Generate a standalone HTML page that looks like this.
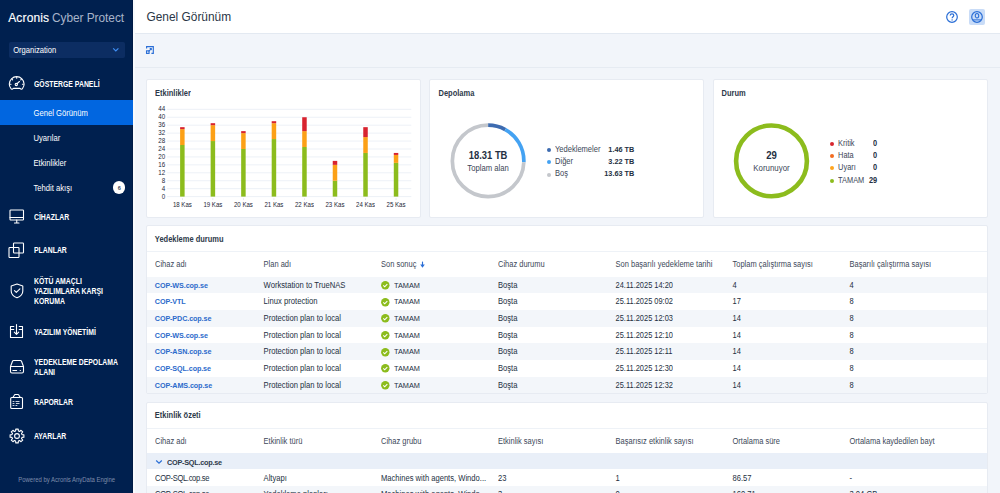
<!DOCTYPE html>
<html><head><meta charset="utf-8"><style>
html,body{margin:0;padding:0;}
body{width:1000px;height:493px;overflow:hidden;position:relative;background:#f2f5fa;font-family:"Liberation Sans",sans-serif;}
.t{position:absolute;white-space:nowrap;line-height:1;}
</style></head><body>
<div style="position:absolute;left:0px;top:0px;width:133px;height:493px;background:#00204f;"></div>
<div style="position:absolute;left:132px;top:0px;width:1px;height:493px;background:#001a44;"></div>
<div style="position:absolute;left:133px;top:0px;width:2px;height:493px;background:#f8fafd;"></div>
<div class="t" style="top:12.00px;font-size:12px;font-weight:400;color:#ffffff;transform:scale(1,1.0);transform-origin:0 10px;left:8.20px;letter-spacing:0.15px;-webkit-text-stroke:0.15px #fff;">Acronis</div>
<div class="t" style="top:13.00px;font-size:11.9px;font-weight:400;color:#a8b4ca;transform:scale(1,1.0);transform-origin:0 9px;left:52.00px;letter-spacing:-0.05px;">Cyber Protect</div>
<div style="position:absolute;left:8.5px;top:42px;width:116.5px;height:16.3px;background:#0c2d62;border-radius:2px;"></div>
<div class="t" style="top:47.00px;font-size:7.6px;font-weight:400;color:#ffffff;transform:scale(1,1.1);transform-origin:0 6px;left:13.20px;">Organization</div>
<svg style="position:absolute;left:112.4px;top:47.2px" width="8" height="6" viewBox="0 0 8 6"><path d="M1.2 1.4 L3.8 3.9 L6.4 1.4" fill="none" stroke="#3f8ff5" stroke-width="1.2"/></svg>
<div style="position:absolute;left:0px;top:100px;width:133px;height:25px;background:#0166e0;"></div>
<div class="t" style="top:110.00px;font-size:7.65px;font-weight:400;color:#ffffff;transform:scale(1,1.1);transform-origin:0 6px;left:33.50px;">Genel Görünüm</div>
<div class="t" style="top:81.00px;font-size:7.4px;font-weight:700;color:#ffffff;transform:scale(0.93,1.1);transform-origin:0 6px;left:33.50px;">GÖSTERGE PANELİ</div>
<div class="t" style="top:135.00px;font-size:7.65px;font-weight:400;color:#ffffff;transform:scale(1,1.1);transform-origin:0 6px;left:33.50px;">Uyarılar</div>
<div class="t" style="top:160.00px;font-size:7.65px;font-weight:400;color:#ffffff;transform:scale(1,1.1);transform-origin:0 6px;left:33.50px;">Etkinlikler</div>
<div class="t" style="top:185.00px;font-size:7.65px;font-weight:400;color:#ffffff;transform:scale(1,1.1);transform-origin:0 6px;left:33.50px;">Tehdit akışı</div>
<div style="position:absolute;left:113px;top:181.3px;width:12.3px;height:12.3px;background:#ffffff;border-radius:50%;"></div>
<div class="t" style="top:186.00px;font-size:5.6px;font-weight:700;color:#3f4a5c;transform:scale(1,1.0);transform-origin:0 4px;left:-80.80px;width:400px;text-align:center;">6</div>
<div class="t" style="top:214.00px;font-size:7.4px;font-weight:700;color:#ffffff;transform:scale(0.93,1.1);transform-origin:0 6px;left:33.50px;">CİHAZLAR</div>
<div class="t" style="top:247.00px;font-size:7.4px;font-weight:700;color:#ffffff;transform:scale(0.93,1.1);transform-origin:0 6px;left:33.50px;">PLANLAR</div>
<div class="t" style="top:278.00px;font-size:7.4px;font-weight:700;color:#ffffff;transform:scale(0.93,1.1);transform-origin:0 6px;left:33.50px;">KÖTÜ AMAÇLI</div>
<div class="t" style="top:288.00px;font-size:7.4px;font-weight:700;color:#ffffff;transform:scale(0.93,1.1);transform-origin:0 6px;left:33.50px;">YAZILIMLARA KARŞI</div>
<div class="t" style="top:298.00px;font-size:7.4px;font-weight:700;color:#ffffff;transform:scale(0.93,1.1);transform-origin:0 6px;left:33.50px;">KORUMA</div>
<div class="t" style="top:329.00px;font-size:7.4px;font-weight:700;color:#ffffff;transform:scale(0.93,1.1);transform-origin:0 6px;left:33.50px;">YAZILIM YÖNETİMİ</div>
<div class="t" style="top:359.00px;font-size:7.4px;font-weight:700;color:#ffffff;transform:scale(0.93,1.1);transform-origin:0 6px;left:33.50px;">YEDEKLEME DEPOLAMA</div>
<div class="t" style="top:369.00px;font-size:7.4px;font-weight:700;color:#ffffff;transform:scale(0.93,1.1);transform-origin:0 6px;left:33.50px;">ALANI</div>
<div class="t" style="top:399.00px;font-size:7.4px;font-weight:700;color:#ffffff;transform:scale(0.93,1.1);transform-origin:0 6px;left:33.50px;">RAPORLAR</div>
<div class="t" style="top:433.00px;font-size:7.4px;font-weight:700;color:#ffffff;transform:scale(0.93,1.1);transform-origin:0 6px;left:33.50px;">AYARLAR</div>
<div class="t" style="top:478.00px;font-size:5.95px;font-weight:400;color:#7d8cab;transform:scale(1,1.1);transform-origin:0 4px;left:18.30px;">Powered by Acronis AnyData Engine</div>
<svg style="position:absolute;left:8px;top:75px" width="18" height="17" viewBox="0 0 18 17"><path d="M2.6 13 C1.7 11.8 1.3 10.4 1.3 9 A7.4 7.4 0 0 1 16.1 9 C16.1 10.4 15.7 11.8 14.8 13 C14.5 13.6 14.1 14.3 13.4 14.3 C12.8 14.3 12.5 13.4 11.8 13.4 H5.6 C4.9 13.4 4.6 14.3 4 14.3 C3.3 14.3 2.9 13.6 2.6 13 Z" fill="none" stroke="#ffffff" stroke-width="1.1" stroke-linecap="round" stroke-linejoin="round"/><circle cx="8.3" cy="9.5" r="1.15" fill="none" stroke="#ffffff" stroke-width="1.1" stroke-linecap="round" stroke-linejoin="round"/><path d="M9.1 8.7 L11.4 6.5" fill="none" stroke="#ffffff" stroke-width="1.1" stroke-linecap="round" stroke-linejoin="round"/><path d="M8.7 2.3 V3.2 M4 4.2 L4.6 4.8 M13.4 4.2 L12.8 4.8 M2.2 9.3 H3 M15.2 9.3 H14.4" fill="none" stroke="#ffffff" stroke-width="1.1" stroke-linecap="round" stroke-linejoin="round"/></svg>
<svg style="position:absolute;left:9px;top:209px" width="16" height="16" viewBox="0 0 16 16"><rect x="1" y="1" width="13.5" height="10" rx="0.8" fill="none" stroke="#ffffff" stroke-width="1.1" stroke-linecap="round" stroke-linejoin="round"/><path d="M1 8.5 H14.5 M7.75 11 V13.5 M5.5 14 H10" fill="none" stroke="#ffffff" stroke-width="1.1" stroke-linecap="round" stroke-linejoin="round"/></svg>
<svg style="position:absolute;left:8px;top:242px" width="17" height="17" viewBox="0 0 17 17"><rect x="5.5" y="1" width="10" height="10" rx="0.8" fill="none" stroke="#ffffff" stroke-width="1.1" stroke-linecap="round" stroke-linejoin="round"/><rect x="1" y="5.5" width="10" height="10" rx="0.8" fill="none" stroke="#ffffff" stroke-width="1.1" stroke-linecap="round" stroke-linejoin="round"/></svg>
<svg style="position:absolute;left:9.5px;top:283px" width="15" height="16" viewBox="0 0 15 16"><path d="M7 1 L12.8 3 V8 C12.8 11.2 10.5 13.5 7 14.8 C3.5 13.5 1.2 11.2 1.2 8 V3 Z" fill="none" stroke="#ffffff" stroke-width="1.1" stroke-linecap="round" stroke-linejoin="round"/><path d="M4.5 7.6 L6.3 9.4 L9.9 5.9" fill="none" stroke="#ffffff" stroke-width="1.1" stroke-linecap="round" stroke-linejoin="round"/></svg>
<svg style="position:absolute;left:9px;top:324px" width="16" height="16" viewBox="0 0 16 16"><path d="M4.8 2.5 H1.5 V13.5 H13.5 V2.5 H10.2 M1.5 5.5 H4.8 M10.2 5.5 H13.5 M7.5 0.6 V10.2 M5.3 8.2 L7.5 10.4 L9.7 8.2" fill="none" stroke="#ffffff" stroke-width="1.1" stroke-linecap="round" stroke-linejoin="round"/></svg>
<svg style="position:absolute;left:9px;top:359px" width="17" height="17" viewBox="0 0 17 17"><path d="M4.6 1.5 H11.4 C12 1.5 12.3 1.8 12.5 2.3 L14.5 7.5 H1.5 L3.5 2.3 C3.7 1.8 4 1.5 4.6 1.5 Z" fill="none" stroke="#ffffff" stroke-width="1.1" stroke-linecap="round" stroke-linejoin="round"/><path d="M1.5 7.5 V12.5 C1.5 13.4 2.1 14 3 14 H13 C13.9 14 14.5 13.4 14.5 12.5 V7.5" fill="none" stroke="#ffffff" stroke-width="1.1" stroke-linecap="round" stroke-linejoin="round"/><path d="M3.9 11.5 H7.6 M11.2 11.5 H11.4" stroke="#fff" stroke-width="1.2" stroke-linecap="round"/></svg>
<svg style="position:absolute;left:9px;top:393px" width="16" height="18" viewBox="0 0 16 18"><rect x="1.7" y="4.5" width="11.8" height="11" rx="1" fill="none" stroke="#ffffff" stroke-width="1.1" stroke-linecap="round" stroke-linejoin="round"/><path d="M3.9 4.5 L5.1 2.4 C5.4 1.8 5.7 1.5 6.3 1.5 H8.9 C9.5 1.5 9.8 1.8 10.1 2.4 L11.3 4.5" fill="none" stroke="#ffffff" stroke-width="1.1" stroke-linecap="round" stroke-linejoin="round"/><path d="M3.6 8.5 H5.4 M6.5 8.5 H10.5 M3.6 10.5 H5.4 M6.9 10.5 H10.5 M3.6 12.5 H5.4 M6.5 12.5 H8.3" stroke="#fff" stroke-opacity="0.8" stroke-width="1.1"/></svg>
<svg style="position:absolute;left:8.6px;top:427.5px" width="16" height="16" viewBox="0 0 16 16"><path d="M6.61 2.99 L6.78 1.11 L9.22 1.11 L9.39 2.99 L10.56 3.47 L12.02 2.27 L13.73 3.98 L12.53 5.44 L13.01 6.61 L14.89 6.78 L14.89 9.22 L13.01 9.39 L12.53 10.56 L13.73 12.02 L12.02 13.73 L10.56 12.53 L9.39 13.01 L9.22 14.89 L6.78 14.89 L6.61 13.01 L5.44 12.53 L3.98 13.73 L2.27 12.02 L3.47 10.56 L2.99 9.39 L1.11 9.22 L1.11 6.78 L2.99 6.61 L3.47 5.44 L2.27 3.98 L3.98 2.27 L5.44 3.47 Z" fill="none" stroke="#ffffff" stroke-width="1.1" stroke-linecap="round" stroke-linejoin="round"/><circle cx="8" cy="8" r="2.4" fill="none" stroke="#ffffff" stroke-width="1.1" stroke-linecap="round" stroke-linejoin="round"/></svg>
<div style="position:absolute;left:135px;top:0px;width:865px;height:33px;background:#ffffff;"></div>
<div style="position:absolute;left:135px;top:33px;width:865px;height:1px;background:#e3e9f1;"></div>
<div style="position:absolute;left:135px;top:34px;width:865px;height:32.5px;background:#f2f5fa;"></div>
<div style="position:absolute;left:135px;top:66.5px;width:865px;height:1px;background:#e6ebf2;"></div>
<div style="position:absolute;left:135px;top:67.5px;width:865px;height:430px;background:#f2f5fa;"></div>
<div class="t" style="top:12.00px;font-size:11.9px;font-weight:400;color:#2a3546;transform:scale(1,1.0);transform-origin:0 9px;left:146.50px;">Genel Görünüm</div>
<svg style="position:absolute;left:945px;top:9.7px" width="14" height="14" viewBox="0 0 14 14"><circle cx="7" cy="7" r="5.3" fill="none" stroke="#2a6ed6" stroke-width="1.2"/><path d="M5.2 5.6 C5.2 4.5 6 3.9 7 3.9 C8 3.9 8.8 4.5 8.8 5.5 C8.8 6.6 7.1 6.8 7.1 8.2" fill="none" stroke="#2a6ed6" stroke-width="1.2"/><circle cx="7.1" cy="9.9" r="0.7" fill="#2a6ed6"/></svg>
<div style="position:absolute;left:969px;top:8.5px;width:16px;height:16.3px;background:#c9dcf7;border-radius:2px;"></div>
<svg style="position:absolute;left:970px;top:9.7px" width="14" height="14" viewBox="0 0 14 14"><circle cx="7" cy="7" r="5.3" fill="none" stroke="#2a6ed6" stroke-width="1.2"/><ellipse cx="7" cy="5.7" rx="1.75" ry="2.2" fill="none" stroke="#2a6ed6" stroke-width="1.05"/><path d="M2.9 9.9 H11.1" stroke="#2a6ed6" stroke-width="1.0"/></svg>
<svg style="position:absolute;left:145px;top:45px" width="10" height="10" viewBox="0 0 10 10"><path d="M1.6 3.5 V1.6 H8.3 V8.4 H6.4" fill="none" stroke="#2a6ed6" stroke-width="1.15"/><rect x="1.55" y="5.85" width="2.5" height="2.55" fill="none" stroke="#2a6ed6" stroke-width="1.15"/><path d="M3.6 6.4 L6.2 3.8" stroke="#2a6ed6" stroke-width="1.15"/><path d="M4.2 2.9 H6.8 V5.5 Z" fill="#2a6ed6"/></svg>
<div style="position:absolute;left:146px;top:79px;width:275px;height:139px;background:#ffffff;box-sizing:border-box;border:1px solid #e7ebf2;border-radius:2px;"></div>
<div style="position:absolute;left:429px;top:79px;width:275px;height:139px;background:#ffffff;box-sizing:border-box;border:1px solid #e7ebf2;border-radius:2px;"></div>
<div style="position:absolute;left:713px;top:79px;width:275px;height:139px;background:#ffffff;box-sizing:border-box;border:1px solid #e7ebf2;border-radius:2px;"></div>
<div class="t" style="top:90.00px;font-size:7.5px;font-weight:700;color:#2d394a;transform:scale(1,1.1);transform-origin:0 6px;left:155.00px;">Etkinlikler</div>
<div class="t" style="top:90.00px;font-size:7.5px;font-weight:700;color:#2d394a;transform:scale(1,1.1);transform-origin:0 6px;left:438.50px;">Depolama</div>
<div class="t" style="top:90.00px;font-size:7.5px;font-weight:700;color:#2d394a;transform:scale(1,1.1);transform-origin:0 6px;left:721.50px;">Durum</div>
<svg style="position:absolute;left:0;top:0" width="1000" height="493"><rect x="167.1" y="196.10" width="244.20" height="1" fill="#edf1f7"/><rect x="167.1" y="188.16" width="244.20" height="1" fill="#edf1f7"/><rect x="167.1" y="180.23" width="244.20" height="1" fill="#edf1f7"/><rect x="167.1" y="172.29" width="244.20" height="1" fill="#edf1f7"/><rect x="167.1" y="164.35" width="244.20" height="1" fill="#edf1f7"/><rect x="167.1" y="156.42" width="244.20" height="1" fill="#edf1f7"/><rect x="167.1" y="148.48" width="244.20" height="1" fill="#edf1f7"/><rect x="167.1" y="140.55" width="244.20" height="1" fill="#edf1f7"/><rect x="167.1" y="132.61" width="244.20" height="1" fill="#edf1f7"/><rect x="167.1" y="124.67" width="244.20" height="1" fill="#edf1f7"/><rect x="167.1" y="116.74" width="244.20" height="1" fill="#edf1f7"/><rect x="167.1" y="108.80" width="244.20" height="1" fill="#edf1f7"/><rect x="180.11" y="145.01" width="4.5" height="51.59" fill="#8cbc1d"/><rect x="180.11" y="129.14" width="4.5" height="15.87" fill="#fca016"/><rect x="180.11" y="127.16" width="4.5" height="1.98" fill="#d8232f"/><rect x="181.96" y="198.10" width="0.8" height="2" fill="#dde3ec"/><rect x="210.64" y="141.05" width="4.5" height="55.55" fill="#8cbc1d"/><rect x="210.64" y="125.17" width="4.5" height="15.87" fill="#fca016"/><rect x="210.64" y="123.19" width="4.5" height="1.98" fill="#d8232f"/><rect x="212.49" y="198.10" width="0.8" height="2" fill="#dde3ec"/><rect x="241.16" y="148.98" width="4.5" height="47.62" fill="#8cbc1d"/><rect x="241.16" y="133.11" width="4.5" height="15.87" fill="#fca016"/><rect x="241.16" y="131.12" width="4.5" height="1.98" fill="#d8232f"/><rect x="243.01" y="198.10" width="0.8" height="2" fill="#dde3ec"/><rect x="271.69" y="139.06" width="4.5" height="57.54" fill="#8cbc1d"/><rect x="271.69" y="123.19" width="4.5" height="15.87" fill="#fca016"/><rect x="271.69" y="121.20" width="4.5" height="1.98" fill="#d8232f"/><rect x="273.54" y="198.10" width="0.8" height="2" fill="#dde3ec"/><rect x="302.21" y="147.00" width="4.5" height="49.60" fill="#8cbc1d"/><rect x="302.21" y="131.12" width="4.5" height="15.87" fill="#fca016"/><rect x="302.21" y="117.24" width="4.5" height="13.89" fill="#d8232f"/><rect x="304.06" y="198.10" width="0.8" height="2" fill="#dde3ec"/><rect x="332.74" y="180.73" width="4.5" height="15.87" fill="#8cbc1d"/><rect x="332.74" y="164.85" width="4.5" height="15.87" fill="#fca016"/><rect x="332.74" y="160.89" width="4.5" height="3.97" fill="#d8232f"/><rect x="334.59" y="198.10" width="0.8" height="2" fill="#dde3ec"/><rect x="363.26" y="152.95" width="4.5" height="43.65" fill="#8cbc1d"/><rect x="363.26" y="137.08" width="4.5" height="15.87" fill="#fca016"/><rect x="363.26" y="127.16" width="4.5" height="9.92" fill="#d8232f"/><rect x="365.11" y="198.10" width="0.8" height="2" fill="#dde3ec"/><rect x="393.79" y="162.87" width="4.5" height="33.73" fill="#8cbc1d"/><rect x="393.79" y="154.93" width="4.5" height="7.94" fill="#fca016"/><rect x="393.79" y="152.95" width="4.5" height="1.98" fill="#d8232f"/><rect x="395.64" y="198.10" width="0.8" height="2" fill="#dde3ec"/></svg>
<div class="t" style="top:194.00px;font-size:6.2px;font-weight:400;color:#1e2838;transform:scale(1,1.1);transform-origin:0 5px;right:834.80px;">0</div>
<div class="t" style="top:186.00px;font-size:6.2px;font-weight:400;color:#1e2838;transform:scale(1,1.1);transform-origin:0 5px;right:834.80px;">4</div>
<div class="t" style="top:178.00px;font-size:6.2px;font-weight:400;color:#1e2838;transform:scale(1,1.1);transform-origin:0 5px;right:834.80px;">8</div>
<div class="t" style="top:170.00px;font-size:6.2px;font-weight:400;color:#1e2838;transform:scale(1,1.1);transform-origin:0 5px;right:834.80px;">12</div>
<div class="t" style="top:162.00px;font-size:6.2px;font-weight:400;color:#1e2838;transform:scale(1,1.1);transform-origin:0 5px;right:834.80px;">16</div>
<div class="t" style="top:154.00px;font-size:6.2px;font-weight:400;color:#1e2838;transform:scale(1,1.1);transform-origin:0 5px;right:834.80px;">20</div>
<div class="t" style="top:146.00px;font-size:6.2px;font-weight:400;color:#1e2838;transform:scale(1,1.1);transform-origin:0 5px;right:834.80px;">24</div>
<div class="t" style="top:138.00px;font-size:6.2px;font-weight:400;color:#1e2838;transform:scale(1,1.1);transform-origin:0 5px;right:834.80px;">28</div>
<div class="t" style="top:130.00px;font-size:6.2px;font-weight:400;color:#1e2838;transform:scale(1,1.1);transform-origin:0 5px;right:834.80px;">32</div>
<div class="t" style="top:122.00px;font-size:6.2px;font-weight:400;color:#1e2838;transform:scale(1,1.1);transform-origin:0 5px;right:834.80px;">36</div>
<div class="t" style="top:114.00px;font-size:6.2px;font-weight:400;color:#1e2838;transform:scale(1,1.1);transform-origin:0 5px;right:834.80px;">40</div>
<div class="t" style="top:106.00px;font-size:6.2px;font-weight:400;color:#1e2838;transform:scale(1,1.1);transform-origin:0 5px;right:834.80px;">44</div>
<div class="t" style="top:202.00px;font-size:6.1px;font-weight:400;color:#1e2838;transform:scale(1,1.1);transform-origin:0 5px;left:-17.64px;width:400px;text-align:center;">18 Kas</div>
<div class="t" style="top:202.00px;font-size:6.1px;font-weight:400;color:#1e2838;transform:scale(1,1.1);transform-origin:0 5px;left:12.89px;width:400px;text-align:center;">19 Kas</div>
<div class="t" style="top:202.00px;font-size:6.1px;font-weight:400;color:#1e2838;transform:scale(1,1.1);transform-origin:0 5px;left:43.41px;width:400px;text-align:center;">20 Kas</div>
<div class="t" style="top:202.00px;font-size:6.1px;font-weight:400;color:#1e2838;transform:scale(1,1.1);transform-origin:0 5px;left:73.94px;width:400px;text-align:center;">21 Kas</div>
<div class="t" style="top:202.00px;font-size:6.1px;font-weight:400;color:#1e2838;transform:scale(1,1.1);transform-origin:0 5px;left:104.46px;width:400px;text-align:center;">22 Kas</div>
<div class="t" style="top:202.00px;font-size:6.1px;font-weight:400;color:#1e2838;transform:scale(1,1.1);transform-origin:0 5px;left:134.99px;width:400px;text-align:center;">23 Kas</div>
<div class="t" style="top:202.00px;font-size:6.1px;font-weight:400;color:#1e2838;transform:scale(1,1.1);transform-origin:0 5px;left:165.51px;width:400px;text-align:center;">24 Kas</div>
<div class="t" style="top:202.00px;font-size:6.1px;font-weight:400;color:#1e2838;transform:scale(1,1.1);transform-origin:0 5px;left:196.04px;width:400px;text-align:center;">25 Kas</div>
<svg style="position:absolute;left:0;top:0" width="1000" height="493"><circle cx="488.1" cy="160.9" r="35.75" fill="none" stroke="#3d6bb0" stroke-width="3.7" stroke-dasharray="17.911 224.624" stroke-dashoffset="0.000" transform="rotate(-90 488.1 160.9)"/><circle cx="488.1" cy="160.9" r="35.75" fill="none" stroke="#44a2f2" stroke-width="3.7" stroke-dasharray="39.502 224.624" stroke-dashoffset="-17.911" transform="rotate(-90 488.1 160.9)"/><circle cx="488.1" cy="160.9" r="35.75" fill="none" stroke="#c4c7cc" stroke-width="3.7" stroke-dasharray="167.210 224.624" stroke-dashoffset="-57.413" transform="rotate(-90 488.1 160.9)"/><circle cx="771.5" cy="160.9" r="35.4" fill="none" stroke="#8cbc1d" stroke-width="4.6"/></svg>
<div class="t" style="top:151.00px;font-size:9.4px;font-weight:700;color:#243042;transform:scale(1,1.1);transform-origin:0 8px;left:288.10px;width:400px;text-align:center;">18.31 TB</div>
<div class="t" style="top:165.00px;font-size:7.7px;font-weight:400;color:#3b4657;transform:scale(1,1.1);transform-origin:0 6px;left:288.10px;width:400px;text-align:center;">Toplam alan</div>
<div class="t" style="top:151.00px;font-size:9.6px;font-weight:700;color:#243042;transform:scale(1,1.1);transform-origin:0 8px;left:571.50px;width:400px;text-align:center;">29</div>
<div class="t" style="top:165.00px;font-size:7.9px;font-weight:400;color:#3b4657;transform:scale(1,1.1);transform-origin:0 6px;left:571.50px;width:400px;text-align:center;">Korunuyor</div>
<div style="position:absolute;left:546.5px;top:147.7px;width:4px;height:4px;background:#3d6bb0;border-radius:50%;"></div>
<div class="t" style="top:146.00px;font-size:7.55px;font-weight:400;color:#3b4657;transform:scale(1,1.1);transform-origin:0 6px;left:555.00px;">Yedeklemeler</div>
<div class="t" style="top:146.00px;font-size:7.3px;font-weight:700;color:#243042;transform:scale(1,1.1);transform-origin:0 6px;right:365.70px;">1.46 TB</div>
<div style="position:absolute;left:546.5px;top:160.1px;width:4px;height:4px;background:#44a2f2;border-radius:50%;"></div>
<div class="t" style="top:158.00px;font-size:7.55px;font-weight:400;color:#3b4657;transform:scale(1,1.1);transform-origin:0 6px;left:555.00px;">Diğer</div>
<div class="t" style="top:158.00px;font-size:7.3px;font-weight:700;color:#243042;transform:scale(1,1.1);transform-origin:0 6px;right:365.70px;">3.22 TB</div>
<div style="position:absolute;left:546.5px;top:172.5px;width:4px;height:4px;background:#c4c7cc;border-radius:50%;"></div>
<div class="t" style="top:170.00px;font-size:7.55px;font-weight:400;color:#3b4657;transform:scale(1,1.1);transform-origin:0 6px;left:555.00px;">Boş</div>
<div class="t" style="top:170.00px;font-size:7.3px;font-weight:700;color:#243042;transform:scale(1,1.1);transform-origin:0 6px;right:365.70px;">13.63 TB</div>
<div style="position:absolute;left:829.7px;top:141.5px;width:4.2px;height:4.2px;background:#d7262e;border-radius:50%;"></div>
<div class="t" style="top:140.00px;font-size:7.4px;font-weight:400;color:#3b4657;transform:scale(1,1.1);transform-origin:0 6px;left:838.10px;">Kritik</div>
<div class="t" style="top:140.00px;font-size:7.4px;font-weight:700;color:#243042;transform:scale(1,1.1);transform-origin:0 6px;right:122.80px;">0</div>
<div style="position:absolute;left:829.7px;top:153.9px;width:4.2px;height:4.2px;background:#f36c21;border-radius:50%;"></div>
<div class="t" style="top:152.00px;font-size:7.4px;font-weight:400;color:#3b4657;transform:scale(1,1.1);transform-origin:0 6px;left:838.10px;">Hata</div>
<div class="t" style="top:152.00px;font-size:7.4px;font-weight:700;color:#243042;transform:scale(1,1.1);transform-origin:0 6px;right:122.80px;">0</div>
<div style="position:absolute;left:829.7px;top:166.3px;width:4.2px;height:4.2px;background:#ffa51f;border-radius:50%;"></div>
<div class="t" style="top:164.00px;font-size:7.4px;font-weight:400;color:#3b4657;transform:scale(1,1.1);transform-origin:0 6px;left:838.10px;">Uyarı</div>
<div class="t" style="top:164.00px;font-size:7.4px;font-weight:700;color:#243042;transform:scale(1,1.1);transform-origin:0 6px;right:122.80px;">0</div>
<div style="position:absolute;left:829.7px;top:178.70000000000002px;width:4.2px;height:4.2px;background:#8cbc1d;border-radius:50%;"></div>
<div class="t" style="top:177.00px;font-size:7.4px;font-weight:400;color:#3b4657;transform:scale(1,1.1);transform-origin:0 6px;left:838.10px;">TAMAM</div>
<div class="t" style="top:177.00px;font-size:7.4px;font-weight:700;color:#243042;transform:scale(1,1.1);transform-origin:0 6px;right:122.80px;">29</div>
<div style="position:absolute;left:146px;top:225px;width:842px;height:169px;background:#ffffff;box-sizing:border-box;border:1px solid #e7ebf2;border-radius:2px;"></div>
<div class="t" style="top:236.00px;font-size:7.5px;font-weight:700;color:#2d394a;transform:scale(1,1.1);transform-origin:0 6px;left:154.80px;">Yedekleme durumu</div>
<div style="position:absolute;left:147px;top:251px;width:840px;height:1px;background:#eef2f7;"></div>
<div class="t" style="top:261.00px;font-size:7.5px;font-weight:400;color:#3c4859;transform:scale(1,1.1);transform-origin:0 6px;left:155.00px;">Cihaz adı</div>
<div class="t" style="top:261.00px;font-size:7.5px;font-weight:400;color:#3c4859;transform:scale(1,1.1);transform-origin:0 6px;left:263.60px;">Plan adı</div>
<div class="t" style="top:261.00px;font-size:7.5px;font-weight:400;color:#3c4859;transform:scale(1,1.1);transform-origin:0 6px;left:381.00px;">Son sonuç</div>
<div class="t" style="top:261.00px;font-size:7.5px;font-weight:400;color:#3c4859;transform:scale(1,1.1);transform-origin:0 6px;left:498.00px;">Cihaz durumu</div>
<div class="t" style="top:261.00px;font-size:7.5px;font-weight:400;color:#3c4859;transform:scale(1,1.1);transform-origin:0 6px;left:615.60px;">Son başarılı yedekleme tarihi</div>
<div class="t" style="top:261.00px;font-size:7.5px;font-weight:400;color:#3c4859;transform:scale(1,1.1);transform-origin:0 6px;left:732.50px;">Toplam çalıştırma sayısı</div>
<div class="t" style="top:261.00px;font-size:7.5px;font-weight:400;color:#3c4859;transform:scale(1,1.1);transform-origin:0 6px;left:849.50px;">Başarılı çalıştırma sayısı</div>
<svg style="position:absolute;left:419px;top:261px" width="7" height="8" viewBox="0 0 7 8"><path d="M3.5 0.6 V4.5" fill="none" stroke="#2a6ed6" stroke-width="1.15"/><path d="M1.2 3.6 H5.8 L3.5 6.7 Z" fill="#2a6ed6"/></svg>
<div style="position:absolute;left:147px;top:276.6px;width:840px;height:16.7px;background:#f3f6fa;"></div>
<div class="t" style="top:282.00px;font-size:7.2px;font-weight:700;color:#2b6acb;transform:scale(1,1.1);transform-origin:0 6px;left:154.80px;letter-spacing:-0.1px;">COP-WS.cop.se</div>
<div class="t" style="top:282.00px;font-size:7.65px;font-weight:400;color:#243042;transform:scale(1,1.1);transform-origin:0 6px;left:263.60px;">Workstation to TrueNAS</div>
<svg style="position:absolute;left:381px;top:280.90px" width="9" height="9" viewBox="0 0 9 9"><circle cx="4.3" cy="4.3" r="4.2" fill="#8cbc1d"/><path d="M2.3 4.4 L3.7 5.8 L6.3 3.1" fill="none" stroke="#fff" stroke-width="1.1"/></svg><div class="t" style="top:282.00px;font-size:7.35px;font-weight:400;color:#243042;transform:scale(1,1.1);transform-origin:0 6px;left:394.00px;">TAMAM</div>
<div class="t" style="top:282.00px;font-size:7.6px;font-weight:400;color:#243042;transform:scale(1,1.1);transform-origin:0 6px;left:498.00px;">Boşta</div>
<div class="t" style="top:282.00px;font-size:7.45px;font-weight:400;color:#243042;transform:scale(1,1.1);transform-origin:0 6px;left:615.60px;">24.11.2025 14:20</div>
<div class="t" style="top:282.00px;font-size:7.5px;font-weight:400;color:#243042;transform:scale(1,1.1);transform-origin:0 6px;left:732.50px;">4</div>
<div class="t" style="top:282.00px;font-size:7.5px;font-weight:400;color:#243042;transform:scale(1,1.1);transform-origin:0 6px;left:849.50px;">4</div>
<div class="t" style="top:298.00px;font-size:7.2px;font-weight:700;color:#2b6acb;transform:scale(1,1.1);transform-origin:0 6px;left:154.80px;letter-spacing:-0.1px;">COP-VTL</div>
<div class="t" style="top:298.00px;font-size:7.65px;font-weight:400;color:#243042;transform:scale(1,1.1);transform-origin:0 6px;left:263.60px;">Linux protection</div>
<svg style="position:absolute;left:381px;top:297.57px" width="9" height="9" viewBox="0 0 9 9"><circle cx="4.3" cy="4.3" r="4.2" fill="#8cbc1d"/><path d="M2.3 4.4 L3.7 5.8 L6.3 3.1" fill="none" stroke="#fff" stroke-width="1.1"/></svg><div class="t" style="top:298.00px;font-size:7.35px;font-weight:400;color:#243042;transform:scale(1,1.1);transform-origin:0 6px;left:394.00px;">TAMAM</div>
<div class="t" style="top:298.00px;font-size:7.6px;font-weight:400;color:#243042;transform:scale(1,1.1);transform-origin:0 6px;left:498.00px;">Boşta</div>
<div class="t" style="top:298.00px;font-size:7.45px;font-weight:400;color:#243042;transform:scale(1,1.1);transform-origin:0 6px;left:615.60px;">25.11.2025 09:02</div>
<div class="t" style="top:298.00px;font-size:7.5px;font-weight:400;color:#243042;transform:scale(1,1.1);transform-origin:0 6px;left:732.50px;">17</div>
<div class="t" style="top:298.00px;font-size:7.5px;font-weight:400;color:#243042;transform:scale(1,1.1);transform-origin:0 6px;left:849.50px;">8</div>
<div style="position:absolute;left:147px;top:310.0px;width:840px;height:16.7px;background:#f3f6fa;"></div>
<div class="t" style="top:315.00px;font-size:7.2px;font-weight:700;color:#2b6acb;transform:scale(1,1.1);transform-origin:0 6px;left:154.80px;letter-spacing:-0.1px;">COP-PDC.cop.se</div>
<div class="t" style="top:315.00px;font-size:7.65px;font-weight:400;color:#243042;transform:scale(1,1.1);transform-origin:0 6px;left:263.60px;">Protection plan to local</div>
<svg style="position:absolute;left:381px;top:314.24px" width="9" height="9" viewBox="0 0 9 9"><circle cx="4.3" cy="4.3" r="4.2" fill="#8cbc1d"/><path d="M2.3 4.4 L3.7 5.8 L6.3 3.1" fill="none" stroke="#fff" stroke-width="1.1"/></svg><div class="t" style="top:315.00px;font-size:7.35px;font-weight:400;color:#243042;transform:scale(1,1.1);transform-origin:0 6px;left:394.00px;">TAMAM</div>
<div class="t" style="top:315.00px;font-size:7.6px;font-weight:400;color:#243042;transform:scale(1,1.1);transform-origin:0 6px;left:498.00px;">Boşta</div>
<div class="t" style="top:315.00px;font-size:7.45px;font-weight:400;color:#243042;transform:scale(1,1.1);transform-origin:0 6px;left:615.60px;">25.11.2025 12:03</div>
<div class="t" style="top:315.00px;font-size:7.5px;font-weight:400;color:#243042;transform:scale(1,1.1);transform-origin:0 6px;left:732.50px;">14</div>
<div class="t" style="top:315.00px;font-size:7.5px;font-weight:400;color:#243042;transform:scale(1,1.1);transform-origin:0 6px;left:849.50px;">8</div>
<div class="t" style="top:332.00px;font-size:7.2px;font-weight:700;color:#2b6acb;transform:scale(1,1.1);transform-origin:0 6px;left:154.80px;letter-spacing:-0.1px;">COP-WS.cop.se</div>
<div class="t" style="top:332.00px;font-size:7.65px;font-weight:400;color:#243042;transform:scale(1,1.1);transform-origin:0 6px;left:263.60px;">Protection plan to local</div>
<svg style="position:absolute;left:381px;top:330.91px" width="9" height="9" viewBox="0 0 9 9"><circle cx="4.3" cy="4.3" r="4.2" fill="#8cbc1d"/><path d="M2.3 4.4 L3.7 5.8 L6.3 3.1" fill="none" stroke="#fff" stroke-width="1.1"/></svg><div class="t" style="top:332.00px;font-size:7.35px;font-weight:400;color:#243042;transform:scale(1,1.1);transform-origin:0 6px;left:394.00px;">TAMAM</div>
<div class="t" style="top:332.00px;font-size:7.6px;font-weight:400;color:#243042;transform:scale(1,1.1);transform-origin:0 6px;left:498.00px;">Boşta</div>
<div class="t" style="top:332.00px;font-size:7.45px;font-weight:400;color:#243042;transform:scale(1,1.1);transform-origin:0 6px;left:615.60px;">25.11.2025 12:10</div>
<div class="t" style="top:332.00px;font-size:7.5px;font-weight:400;color:#243042;transform:scale(1,1.1);transform-origin:0 6px;left:732.50px;">14</div>
<div class="t" style="top:332.00px;font-size:7.5px;font-weight:400;color:#243042;transform:scale(1,1.1);transform-origin:0 6px;left:849.50px;">8</div>
<div style="position:absolute;left:147px;top:343.4px;width:840px;height:16.7px;background:#f3f6fa;"></div>
<div class="t" style="top:348.00px;font-size:7.2px;font-weight:700;color:#2b6acb;transform:scale(1,1.1);transform-origin:0 6px;left:154.80px;letter-spacing:-0.1px;">COP-ASN.cop.se</div>
<div class="t" style="top:348.00px;font-size:7.65px;font-weight:400;color:#243042;transform:scale(1,1.1);transform-origin:0 6px;left:263.60px;">Protection plan to local</div>
<svg style="position:absolute;left:381px;top:347.58px" width="9" height="9" viewBox="0 0 9 9"><circle cx="4.3" cy="4.3" r="4.2" fill="#8cbc1d"/><path d="M2.3 4.4 L3.7 5.8 L6.3 3.1" fill="none" stroke="#fff" stroke-width="1.1"/></svg><div class="t" style="top:348.00px;font-size:7.35px;font-weight:400;color:#243042;transform:scale(1,1.1);transform-origin:0 6px;left:394.00px;">TAMAM</div>
<div class="t" style="top:348.00px;font-size:7.6px;font-weight:400;color:#243042;transform:scale(1,1.1);transform-origin:0 6px;left:498.00px;">Boşta</div>
<div class="t" style="top:348.00px;font-size:7.45px;font-weight:400;color:#243042;transform:scale(1,1.1);transform-origin:0 6px;left:615.60px;">25.11.2025 12:11</div>
<div class="t" style="top:348.00px;font-size:7.5px;font-weight:400;color:#243042;transform:scale(1,1.1);transform-origin:0 6px;left:732.50px;">14</div>
<div class="t" style="top:348.00px;font-size:7.5px;font-weight:400;color:#243042;transform:scale(1,1.1);transform-origin:0 6px;left:849.50px;">8</div>
<div class="t" style="top:365.00px;font-size:7.2px;font-weight:700;color:#2b6acb;transform:scale(1,1.1);transform-origin:0 6px;left:154.80px;letter-spacing:-0.1px;">COP-SQL.cop.se</div>
<div class="t" style="top:365.00px;font-size:7.65px;font-weight:400;color:#243042;transform:scale(1,1.1);transform-origin:0 6px;left:263.60px;">Protection plan to local</div>
<svg style="position:absolute;left:381px;top:364.25px" width="9" height="9" viewBox="0 0 9 9"><circle cx="4.3" cy="4.3" r="4.2" fill="#8cbc1d"/><path d="M2.3 4.4 L3.7 5.8 L6.3 3.1" fill="none" stroke="#fff" stroke-width="1.1"/></svg><div class="t" style="top:365.00px;font-size:7.35px;font-weight:400;color:#243042;transform:scale(1,1.1);transform-origin:0 6px;left:394.00px;">TAMAM</div>
<div class="t" style="top:365.00px;font-size:7.6px;font-weight:400;color:#243042;transform:scale(1,1.1);transform-origin:0 6px;left:498.00px;">Boşta</div>
<div class="t" style="top:365.00px;font-size:7.45px;font-weight:400;color:#243042;transform:scale(1,1.1);transform-origin:0 6px;left:615.60px;">25.11.2025 12:30</div>
<div class="t" style="top:365.00px;font-size:7.5px;font-weight:400;color:#243042;transform:scale(1,1.1);transform-origin:0 6px;left:732.50px;">14</div>
<div class="t" style="top:365.00px;font-size:7.5px;font-weight:400;color:#243042;transform:scale(1,1.1);transform-origin:0 6px;left:849.50px;">8</div>
<div style="position:absolute;left:147px;top:376.8px;width:840px;height:16.2px;background:#f3f6fa;"></div>
<div class="t" style="top:382.00px;font-size:7.2px;font-weight:700;color:#2b6acb;transform:scale(1,1.1);transform-origin:0 6px;left:154.80px;letter-spacing:-0.1px;">COP-AMS.cop.se</div>
<div class="t" style="top:382.00px;font-size:7.65px;font-weight:400;color:#243042;transform:scale(1,1.1);transform-origin:0 6px;left:263.60px;">Protection plan to local</div>
<svg style="position:absolute;left:381px;top:380.92px" width="9" height="9" viewBox="0 0 9 9"><circle cx="4.3" cy="4.3" r="4.2" fill="#8cbc1d"/><path d="M2.3 4.4 L3.7 5.8 L6.3 3.1" fill="none" stroke="#fff" stroke-width="1.1"/></svg><div class="t" style="top:382.00px;font-size:7.35px;font-weight:400;color:#243042;transform:scale(1,1.1);transform-origin:0 6px;left:394.00px;">TAMAM</div>
<div class="t" style="top:382.00px;font-size:7.6px;font-weight:400;color:#243042;transform:scale(1,1.1);transform-origin:0 6px;left:498.00px;">Boşta</div>
<div class="t" style="top:382.00px;font-size:7.45px;font-weight:400;color:#243042;transform:scale(1,1.1);transform-origin:0 6px;left:615.60px;">25.11.2025 12:32</div>
<div class="t" style="top:382.00px;font-size:7.5px;font-weight:400;color:#243042;transform:scale(1,1.1);transform-origin:0 6px;left:732.50px;">14</div>
<div class="t" style="top:382.00px;font-size:7.5px;font-weight:400;color:#243042;transform:scale(1,1.1);transform-origin:0 6px;left:849.50px;">8</div>
<div style="position:absolute;left:146px;top:402px;width:842px;height:120px;background:#ffffff;box-sizing:border-box;border:1px solid #e7ebf2;border-radius:2px;"></div>
<div class="t" style="top:412.00px;font-size:7.5px;font-weight:700;color:#2d394a;transform:scale(1,1.1);transform-origin:0 6px;left:154.80px;">Etkinlik özeti</div>
<div style="position:absolute;left:147px;top:427.5px;width:840px;height:1px;background:#eef2f7;"></div>
<div class="t" style="top:438.00px;font-size:7.5px;font-weight:400;color:#3c4859;transform:scale(1,1.1);transform-origin:0 6px;left:155.00px;">Cihaz adı</div>
<div class="t" style="top:438.00px;font-size:7.5px;font-weight:400;color:#3c4859;transform:scale(1,1.1);transform-origin:0 6px;left:263.60px;">Etkinlik türü</div>
<div class="t" style="top:438.00px;font-size:7.5px;font-weight:400;color:#3c4859;transform:scale(1,1.1);transform-origin:0 6px;left:381.00px;">Cihaz grubu</div>
<div class="t" style="top:438.00px;font-size:7.5px;font-weight:400;color:#3c4859;transform:scale(1,1.1);transform-origin:0 6px;left:498.00px;">Etkinlik sayısı</div>
<div class="t" style="top:438.00px;font-size:7.5px;font-weight:400;color:#3c4859;transform:scale(1,1.1);transform-origin:0 6px;left:615.60px;">Başarısız etkinlik sayısı</div>
<div class="t" style="top:438.00px;font-size:7.5px;font-weight:400;color:#3c4859;transform:scale(1,1.1);transform-origin:0 6px;left:732.50px;">Ortalama süre</div>
<div class="t" style="top:438.00px;font-size:7.5px;font-weight:400;color:#3c4859;transform:scale(1,1.1);transform-origin:0 6px;left:849.50px;">Ortalama kaydedilen bayt</div>
<div style="position:absolute;left:147px;top:452.6px;width:840px;height:16.3px;background:#e9eff8;"></div>
<svg style="position:absolute;left:155px;top:458.6px" width="8" height="6" viewBox="0 0 8 6"><path d="M1.2 1.5 L4 4.2 L6.8 1.5" fill="none" stroke="#2a6ed6" stroke-width="1.2"/></svg>
<div class="t" style="top:459.00px;font-size:7.3px;font-weight:700;color:#2d394a;transform:scale(1,1.1);transform-origin:0 6px;left:167.00px;letter-spacing:-0.25px;">COP-SQL.cop.se</div>
<div class="t" style="top:475.00px;font-size:7.6px;font-weight:400;color:#243042;transform:scale(1,1.1);transform-origin:0 6px;left:155.00px;letter-spacing:-0.33px;">COP-SQL.cop.se</div>
<div class="t" style="top:475.00px;font-size:7.6px;font-weight:400;color:#243042;transform:scale(1,1.1);transform-origin:0 6px;left:263.60px;">Altyapı</div>
<div class="t" style="top:475.00px;font-size:7.6px;font-weight:400;color:#243042;transform:scale(1,1.1);transform-origin:0 6px;left:381.00px;">Machines with agents, Windo...</div>
<div class="t" style="top:475.00px;font-size:7.6px;font-weight:400;color:#243042;transform:scale(1,1.1);transform-origin:0 6px;left:498.00px;">23</div>
<div class="t" style="top:475.00px;font-size:7.6px;font-weight:400;color:#243042;transform:scale(1,1.1);transform-origin:0 6px;left:615.60px;">1</div>
<div class="t" style="top:475.00px;font-size:7.6px;font-weight:400;color:#243042;transform:scale(1,1.1);transform-origin:0 6px;left:732.50px;">86.57</div>
<div class="t" style="top:475.00px;font-size:7.6px;font-weight:400;color:#243042;transform:scale(1,1.1);transform-origin:0 6px;left:849.50px;">-</div>
<div style="position:absolute;left:147px;top:485.57px;width:840px;height:16.67px;background:#f3f6fa;"></div>
<div class="t" style="top:491.00px;font-size:7.6px;font-weight:400;color:#243042;transform:scale(1,1.1);transform-origin:0 6px;left:155.00px;letter-spacing:-0.33px;">COP-SQL.cop.se</div>
<div class="t" style="top:491.00px;font-size:7.6px;font-weight:400;color:#243042;transform:scale(1,1.1);transform-origin:0 6px;left:263.60px;">Yedekleme planları</div>
<div class="t" style="top:491.00px;font-size:7.6px;font-weight:400;color:#243042;transform:scale(1,1.1);transform-origin:0 6px;left:381.00px;">Machines with agents, Windo...</div>
<div class="t" style="top:491.00px;font-size:7.6px;font-weight:400;color:#243042;transform:scale(1,1.1);transform-origin:0 6px;left:498.00px;">3</div>
<div class="t" style="top:491.00px;font-size:7.6px;font-weight:400;color:#243042;transform:scale(1,1.1);transform-origin:0 6px;left:615.60px;">0</div>
<div class="t" style="top:491.00px;font-size:7.6px;font-weight:400;color:#243042;transform:scale(1,1.1);transform-origin:0 6px;left:732.50px;">160.71</div>
<div class="t" style="top:491.00px;font-size:7.6px;font-weight:400;color:#243042;transform:scale(1,1.1);transform-origin:0 6px;left:849.50px;">3.04 GB</div>
</body></html>
